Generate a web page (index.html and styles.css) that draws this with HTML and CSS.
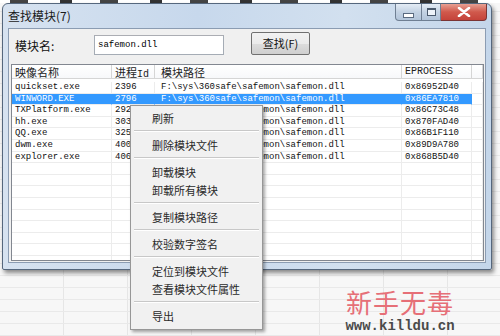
FILE: index.html
```html
<!DOCTYPE html>
<html lang="zh-CN">
<head>
    <meta charset="UTF-8">
    <title>查找模块</title>
    <link rel="stylesheet" href="styles.css">
</head>
<body>
    <div class="backdrop-strip"></div>

    <div class="window">
        <div class="titlebar">
            <span class="title">查找模块(7)</span>
            <div class="caption-buttons">
                <div class="cap-btn cap-min"><span class="min-bar"></span></div>
                <div class="cap-btn cap-max"><span class="max-box"></span></div>
                <div class="cap-btn cap-close">
                    <svg width="14" height="10" viewBox="0 0 14 10">
                        <path d="M2 1 L12 9 M12 1 L2 9" stroke="#fff" stroke-width="2.6" stroke-linecap="round"/>
                    </svg>
                </div>
            </div>
        </div>

        <div class="client">
            <div class="search-row">
                <span class="label">模块名:</span>
                <div class="input">safemon.dll</div>
                <div class="find-button">查找(F)</div>
            </div>

            <div class="listview">
                <div class="row header">
                    <div class="cell c1">映像名称</div>
                    <div class="cell c2">进程<span class="mono">Id</span></div>
                    <div class="cell c3">模块路径</div>
                    <div class="cell c4 mono">EPROCESS</div>
                    <div class="cell c5"></div>
                </div>
                <div id="rows"></div>
            </div>
        </div>
    </div>

    <div class="bottom-area"></div>

    <div class="context-menu">
        <div class="menu-item">刷新</div>
        <div class="menu-sep"></div>
        <div class="menu-item">删除模块文件</div>
        <div class="menu-sep"></div>
        <div class="menu-item">卸载模块</div>
        <div class="menu-item">卸载所有模块</div>
        <div class="menu-sep"></div>
        <div class="menu-item">复制模块路径</div>
        <div class="menu-sep"></div>
        <div class="menu-item">校验数字签名</div>
        <div class="menu-sep"></div>
        <div class="menu-item">定位到模块文件</div>
        <div class="menu-item">查看模块文件属性</div>
        <div class="menu-sep"></div>
        <div class="menu-item">导出</div>
    </div>

    <div class="watermark">
        <div class="wm-title">新手无毒</div>
        <div class="wm-url">www.killdu.cn</div>
    </div>

    <script>
        const modules = [
            ['quickset.exe', '2396', '0x86952D40'],
            ['WINWORD.EXE', '2796', '0x86EA7810'],
            ['TXPlatform.exe', '2920', '0x86C73C48'],
            ['hh.exe', '3036', '0x870FAD40'],
            ['QQ.exe', '3256', '0x86B1F110'],
            ['dwm.exe', '4000', '0x89D9A780'],
            ['explorer.exe', '4068', '0x868B5D40']
        ];
        const path = 'F:\\sys\\360safe\\safemon\\safemon.dll';
        const rows = document.getElementById('rows');

        for (let i = 0; i < 16; i++) {
            const m = modules[i];
            const row = document.createElement('div');
            row.className = 'row mono' + (i === 1 ? ' selected' : '');
            if (m) {
                row.innerHTML = `<div class="cell c1">${m[0]}</div><div class="cell c2">${m[1]}</div>` +
                    `<div class="cell c3">${path}</div><div class="cell c4">${m[2]}</div><div class="cell c5"></div>`;
            } else {
                row.innerHTML = '<div class="cell c1"></div><div class="cell c2"></div><div class="cell c3"></div><div class="cell c4"></div><div class="cell c5"></div>';
            }
            rows.appendChild(row);
        }
    </script>
</body>
</html>
```

FILE: styles.css
```css
body {
    margin: 0;
    width: 500px;
    height: 336px;
    overflow: hidden;
    position: relative;
    font-family: "Noto Sans CJK SC", "Liberation Sans", sans-serif;
    color: #111;
    background-color: #f7f7f7;
    background-image:
        repeating-linear-gradient(to bottom, transparent 0 11px, #e9e9e9 11px 12px),
        repeating-linear-gradient(to right, transparent 0 63px, #e6e6e6 63px 64px);
}

.mono {
    font-family: "Liberation Mono", monospace;
}

.backdrop-strip {
    height: 3px;
    background: repeating-linear-gradient(to right, #fff 0 10px, #444 10px 28px, #fff 28px 60px, #333 60px 72px, #fff 72px 90px);
}

/* Win7 style window */
.window {
    margin-left: 2px;
    width: 490px;
    height: 267px;
    box-sizing: border-box;
    border: 1px solid #55677d;
    border-radius: 6px 6px 2px 2px;
    padding: 0 5px 6px 5px;
    background: linear-gradient(to right, #d6e2f0, #c7d8ec 40%, #d2e0ef 70%, #c4d6ea);
    box-shadow: 2px 3px 4px rgba(0, 0, 0, 0.45);
    display: flex;
    flex-direction: column;
}

.titlebar {
    height: 24px;
    display: flex;
    align-items: flex-start;
    justify-content: space-between;
}

.title {
    margin-top: 5px;
    font-size: 12px;
    color: #1a1a1a;
    line-height: 14px;
}

.caption-buttons {
    display: flex;
    margin-right: -1px;
}

.cap-btn {
    height: 17px;
    display: flex;
    align-items: center;
    justify-content: center;
    border: 1px solid #6f7f93;
    border-top: none;
    box-sizing: border-box;
}

.cap-min {
    width: 27px;
    border-radius: 0 0 0 4px;
    background: linear-gradient(#e4ecf5, #c3d2e3 50%, #b3c5da);
}

.cap-max {
    width: 19px;
    border-left: none;
    background: linear-gradient(#e4ecf5, #c3d2e3 50%, #b3c5da);
}

.cap-close {
    width: 46px;
    border-left: none;
    border-radius: 0 0 4px 0;
    border-color: #7a3434;
    background: linear-gradient(#e8a093, #d0594c 50%, #c4433a);
}

.min-bar {
    width: 9px;
    height: 3px;
    margin-top: 6px;
    background: #fff;
    border: 1px solid #5b6b80;
}

.max-box {
    width: 7px;
    height: 5px;
    border: 1px solid #4b5a6d;
    border-top-width: 2px;
    background: #eef3f9;
}

.client {
    flex: 1;
    background: #f0f0f0;
    border: 1px solid #8b9cb2;
    display: flex;
    flex-direction: column;
    padding: 0 1px 1px 1px;
    min-height: 0;
}

.search-row {
    height: 35px;
    display: flex;
    align-items: flex-start;
    font-size: 12px;
}

.label {
    margin: 10px 0 0 5px;
    width: 79px;
    line-height: 14px;
}

.input {
    margin-top: 6px;
    width: 130px;
    height: 20px;
    box-sizing: border-box;
    background: #fff;
    border: 1px solid #a5acb5;
    border-top-color: #abadb3;
    padding: 4px 0 0 3px;
    font-family: "Liberation Mono", monospace;
    font-size: 9px;
    color: #000;
}

.find-button {
    margin: 3px 0 0 27px;
    width: 59px;
    height: 23px;
    box-sizing: border-box;
    border: 1px solid #707070;
    border-radius: 2px;
    background: linear-gradient(#f2f2f2, #ebebeb 50%, #dddddd 51%, #cfcfcf);
    text-align: center;
    line-height: 20px;
    font-size: 11px;
}

.listview {
    flex: 1;
    margin-left: 1px;
    background: #fff;
    border: 1px solid #828790;
    overflow: hidden;
}

.row {
    display: flex;
    height: 11.6px;
    line-height: 11.6px;
    font-size: 9px;
}

.row .cell {
    border-right: 1px solid #ececec;
    border-bottom: 1px solid #ececec;
    box-sizing: border-box;
    padding-left: 3px;
    white-space: nowrap;
    overflow: hidden;
}

.row.header {
    height: 14px;
    line-height: 14px;
    font-size: 11px;
    margin-bottom: 3px;
}

.row.header .cell {
    background: linear-gradient(#ffffff, #f7f8fa);
    border-right: 1px solid #d5d5d5;
    border-bottom: 1px solid #d5d5d5;
    color: #222;
}

.row.header .c4 {
    font-size: 9px;
}

.row.header .mono {
    font-size: 10px;
}

.c1 { width: 100px; }
.c2 { width: 43px; }
.c3 { width: 247px; padding-left: 6px !important; }
.c4 { width: 70px; }
.c5 { flex: 1; }

.row.selected .c1,
.row.selected .c2,
.row.selected .c3,
.row.selected .c4 {
    background: #3399ff;
    color: #fff;
    border-right-color: #3399ff;
}

.bottom-area {
    height: 66px;
}

/* popup menu */
.context-menu {
    position: absolute;
    left: 130px;
    top: 105px;
    width: 133px;
    box-sizing: border-box;
    padding: 3px 2px 4px 2px;
    background: #f1f1f1;
    border: 1px solid #979797;
    box-shadow: 2px 2px 3px rgba(0, 0, 0, 0.35);
    font-size: 11px;
    color: #2a2a2a;
}

.menu-item {
    height: 18px;
    line-height: 18px;
    padding-left: 19px;
}

.menu-sep {
    height: 1px;
    margin: 3px 1px 4px 1px;
    background: #c8c8c8;
    border-bottom: 1px solid #fff;
}

.watermark {
    position: absolute;
    left: 344px;
    top: 286px;
    width: 112px;
    text-align: center;
}

.wm-title {
    font-size: 26px;
    line-height: 32px;
    color: #e66f77;
    letter-spacing: 1px;
}

.wm-url {
    font-family: "Liberation Mono", monospace;
    font-size: 14px;
    line-height: 16px;
    color: #4a4a4a;
    font-weight: bold;
}
```
